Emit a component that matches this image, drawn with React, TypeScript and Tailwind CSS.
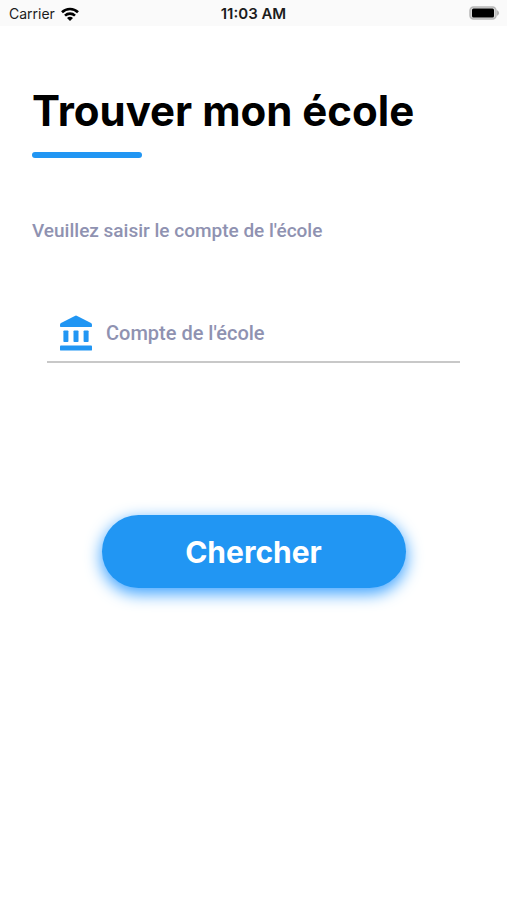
import { useState } from 'react';
import type { FormEvent } from 'react';

function WifiIcon() {
  return (
    <svg width="18" height="14" viewBox="0 0 18 14" fill="none" stroke="black" strokeWidth="2.6">
      <path d="M1 5.2C5.4 0.9 12.6 0.9 17 5.2" />
      <path d="M4 8.6C6.8 5.9 11.2 5.9 14 8.6" />
      <path d="M9 14L6 11C7.8 9.4 10.2 9.4 12 11Z" fill="black" stroke="none" />
    </svg>
  );
}

function BatteryIcon() {
  return (
    <svg width="31" height="14" viewBox="0 0 31 14">
      <rect x="1" y="1" width="26" height="12" rx="3.5" fill="#d8d8d8" stroke="#b8b8b8" strokeWidth="1.5" />
      <rect x="3" y="2.5" width="22" height="9" rx="1.5" fill="black" />
      <path d="M28 4.2C30.8 5.6 30.8 8.4 28 9.8Z" fill="#b5b5b5" />
    </svg>
  );
}

function SchoolIcon() {
  return (
    <svg width="32" height="36" viewBox="0 0 32 36" fill="#2196f3" className="shrink-0">
      <path d="M14.8 0.9Q16 0.3 17.2 0.9L31 8Q32 8.6 32 9.6V11.2Q32 12 31.2 12H0.8Q0 12 0 11.2V9.6Q0 8.6 1 8Z" />
      <rect x="3.4" y="15.4" width="5" height="11.6" rx="0.8" />
      <rect x="13.5" y="15.4" width="5" height="11.6" rx="0.8" />
      <rect x="23.6" y="15.4" width="5" height="11.6" rx="0.8" />
      <rect x="0" y="30.4" width="32" height="5.2" rx="0.9" />
    </svg>
  );
}

function StatusBar() {
  return (
    <div className="grid grid-cols-3 items-center h-[26px] px-[7px] bg-[#fafafa] text-sm leading-5 text-[#1c1c1c]">
      <div className="flex items-center gap-1.5 pl-0.5 pt-0.5">
        <span>Carrier</span>
        <WifiIcon />
      </div>
      <span className="pt-0.5 text-center text-[15px] font-semibold">11:03 AM</span>
      <div className="flex justify-end">
        <BatteryIcon />
      </div>
    </div>
  );
}

export default function App() {
  const [account, setAccount] = useState('');

  const handleSubmit = (e: FormEvent) => {
    e.preventDefault();
  };

  return (
    <div className="min-h-screen bg-white font-['Inter',sans-serif]">
      <StatusBar />

      <main className="px-8 pt-[60px]">
        <h1 className="text-[42px] leading-[50px] font-bold text-black">Trouver mon école</h1>
        <div className="mt-4 h-[6px] w-[110px] rounded-full bg-[#2196f3]" />

        <form onSubmit={handleSubmit}>
          <label htmlFor="account" className="block mt-[60px] font-['Roboto',sans-serif] text-[19px] leading-[26px] font-medium text-[#8f92b1]">
            Veuillez saisir le compte de l'école
          </label>

          <div className="flex items-center gap-[14px] mt-[61px] mx-[15px] pl-[13px] h-[58px] border-b-2 border-[#c8c8c8]">
            <SchoolIcon />
            <input
              id="account"
              type="text"
              value={account}
              onChange={(e) => setAccount(e.target.value)}
              placeholder="Compte de l'école"
              className="flex-1 min-w-0 bg-transparent font-['Roboto',sans-serif] text-xl font-medium text-[#8f92b1] placeholder:text-[#8f92b1] outline-none"
            />
          </div>

          <button
            type="submit"
            className="block mx-auto mt-[152px] w-[304px] h-[73px] rounded-full bg-[#2196f3] text-[30px] leading-9 font-bold text-white shadow-[0_5px_16px_1px_#42a5ff]"
          >
            Chercher
          </button>
        </form>
      </main>
    </div>
  );
}
